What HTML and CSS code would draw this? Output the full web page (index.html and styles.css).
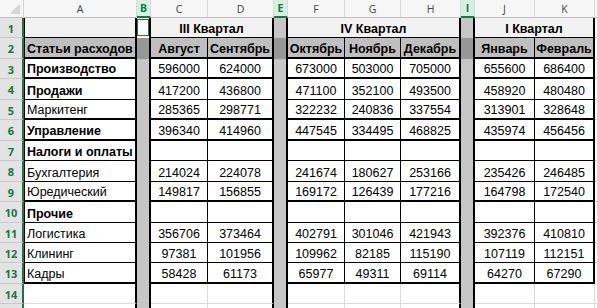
FILE: index.html
```html
<!DOCTYPE html>
<html lang="ru">
<head>
<meta charset="utf-8">
<title>Расходы</title>
<link rel="stylesheet" href="styles.css">
</head>
<body>
<div class="sheet">
  <div class="corner"></div>
  <div class="ch">A</div><div class="ch sel">B</div><div class="ch">C</div><div class="ch">D</div><div class="ch sel">E</div><div class="ch">F</div><div class="ch">G</div><div class="ch">H</div><div class="ch sel">I</div><div class="ch">J</div><div class="ch">K</div><div class="ch"></div>

  <div class="row">
    <div class="rh">1</div>
    <div class="t a q"></div>
    <div class="sep act"><div class="box"></div></div>
    <div class="t q b tr s2">III Квартал</div>
    <div class="sep"></div>
    <div class="t q b tr s3">IV Квартал</div>
    <div class="sep"></div>
    <div class="t q b tr s2">I Квартал</div>
    <div class="c"></div>
  </div>

  <div class="row tb">
    <div class="rh">2</div>
    <div class="t a g b">Статьи расходов</div>
    <div class="sep dk"></div>
    <div class="t g b">Август</div><div class="t g b tr">Сентябрь</div>
    <div class="sep dk"></div>
    <div class="t g b">Октябрь</div><div class="t g b">Ноябрь</div><div class="t g b tr">Декабрь</div>
    <div class="sep dk"></div>
    <div class="t g b">Январь</div><div class="t g b tr">Февраль</div>
    <div class="c"></div>
  </div>

  <div class="row tb">
    <div class="rh">3</div>
    <div class="t a b">Производство</div>
    <div class="sep"></div>
    <div class="t">596000</div><div class="t tr">624000</div>
    <div class="sep"></div>
    <div class="t">673000</div><div class="t">503000</div><div class="t tr">705000</div>
    <div class="sep"></div>
    <div class="t">655600</div><div class="t tr">686400</div>
    <div class="c"></div>
  </div>

  <div class="row">
    <div class="rh">4</div>
    <div class="t a b">Продажи</div>
    <div class="sep"></div>
    <div class="t">417200</div><div class="t tr">436800</div>
    <div class="sep"></div>
    <div class="t">471100</div><div class="t">352100</div><div class="t tr">493500</div>
    <div class="sep"></div>
    <div class="t">458920</div><div class="t tr">480480</div>
    <div class="c"></div>
  </div>

  <div class="row tb">
    <div class="rh">5</div>
    <div class="t a">Маркитенг</div>
    <div class="sep"></div>
    <div class="t">285365</div><div class="t tr">298771</div>
    <div class="sep"></div>
    <div class="t">322232</div><div class="t">240836</div><div class="t tr">337554</div>
    <div class="sep"></div>
    <div class="t">313901</div><div class="t tr">328648</div>
    <div class="c"></div>
  </div>

  <div class="row tb">
    <div class="rh">6</div>
    <div class="t a b">Управление</div>
    <div class="sep"></div>
    <div class="t">396340</div><div class="t tr">414960</div>
    <div class="sep"></div>
    <div class="t">447545</div><div class="t">334495</div><div class="t tr">468825</div>
    <div class="sep"></div>
    <div class="t">435974</div><div class="t tr">456456</div>
    <div class="c"></div>
  </div>

  <div class="row">
    <div class="rh">7</div>
    <div class="t a b">Налоги и оплаты</div>
    <div class="sep"></div>
    <div class="t"></div><div class="t tr"></div>
    <div class="sep"></div>
    <div class="t"></div><div class="t"></div><div class="t tr"></div>
    <div class="sep"></div>
    <div class="t"></div><div class="t tr"></div>
    <div class="c"></div>
  </div>

  <div class="row">
    <div class="rh">8</div>
    <div class="t a">Бухгалтерия</div>
    <div class="sep"></div>
    <div class="t">214024</div><div class="t tr">224078</div>
    <div class="sep"></div>
    <div class="t">241674</div><div class="t">180627</div><div class="t tr">253166</div>
    <div class="sep"></div>
    <div class="t">235426</div><div class="t tr">246485</div>
    <div class="c"></div>
  </div>

  <div class="row tb">
    <div class="rh">9</div>
    <div class="t a">Юредический</div>
    <div class="sep"></div>
    <div class="t">149817</div><div class="t tr">156855</div>
    <div class="sep"></div>
    <div class="t">169172</div><div class="t">126439</div><div class="t tr">177216</div>
    <div class="sep"></div>
    <div class="t">164798</div><div class="t tr">172540</div>
    <div class="c"></div>
  </div>

  <div class="row">
    <div class="rh">10</div>
    <div class="t a b">Прочие</div>
    <div class="sep"></div>
    <div class="t"></div><div class="t tr"></div>
    <div class="sep"></div>
    <div class="t"></div><div class="t"></div><div class="t tr"></div>
    <div class="sep"></div>
    <div class="t"></div><div class="t tr"></div>
    <div class="c"></div>
  </div>

  <div class="row">
    <div class="rh">11</div>
    <div class="t a">Логистика</div>
    <div class="sep"></div>
    <div class="t">356706</div><div class="t tr">373464</div>
    <div class="sep"></div>
    <div class="t">402791</div><div class="t">301046</div><div class="t tr">421943</div>
    <div class="sep"></div>
    <div class="t">392376</div><div class="t tr">410810</div>
    <div class="c"></div>
  </div>

  <div class="row">
    <div class="rh">12</div>
    <div class="t a">Клининг</div>
    <div class="sep"></div>
    <div class="t">97381</div><div class="t tr">101956</div>
    <div class="sep"></div>
    <div class="t">109962</div><div class="t">82185</div><div class="t tr">115190</div>
    <div class="sep"></div>
    <div class="t">107119</div><div class="t tr">112151</div>
    <div class="c"></div>
  </div>

  <div class="row tb">
    <div class="rh">13</div>
    <div class="t a">Кадры</div>
    <div class="sep"></div>
    <div class="t">58428</div><div class="t tr">61173</div>
    <div class="sep"></div>
    <div class="t">65977</div><div class="t">49311</div><div class="t tr">69114</div>
    <div class="sep"></div>
    <div class="t">64270</div><div class="t tr">67290</div>
    <div class="c"></div>
  </div>

  <div class="row">
    <div class="rh">14</div>
    <div class="c kr"></div>
    <div class="sep"></div>
    <div class="c"></div><div class="c kr"></div>
    <div class="sep"></div>
    <div class="c"></div><div class="c"></div><div class="c kr"></div>
    <div class="sep"></div>
    <div class="c"></div><div class="c"></div>
    <div class="c"></div>
  </div>

  <div class="row">
    <div class="rh"></div>
    <div class="c kr"></div>
    <div class="sep"></div>
    <div class="c"></div><div class="c kr"></div>
    <div class="sep"></div>
    <div class="c"></div><div class="c"></div><div class="c kr"></div>
    <div class="sep"></div>
    <div class="c"></div><div class="c"></div>
    <div class="c"></div>
  </div>
</div>
</body>
</html>
```

FILE: styles.css
```css
body {
  margin: 0;
  background: #fff;
}

.sheet {
  display: grid;
  grid-template-columns: 24px 113px 14px 57px 66px 14px 57px 56px 60px 14px 60px 60px 3px;
  grid-template-rows: 18px 20px 21px 20px 21px 20px 21px 20px 21px 20px 21px 20px 20px 21px 20px 20px;
  width: 598px;
  height: 308px;
  overflow: hidden;
  font-family: "Liberation Sans", Arial, sans-serif;
  font-size: 12.5px;
  color: #000;
}

.row {
  display: contents;
}

.corner, .ch, .rh, .t, .c, .sep {
  box-sizing: border-box;
  display: flex;
  align-items: flex-end;
  justify-content: center;
  white-space: nowrap;
  overflow: hidden;
  line-height: 14px;
  padding-bottom: 1px;
}

.corner {
  background: linear-gradient(135deg, transparent 50%, #d6d6d6 50%) no-repeat right 3px bottom 3px / 10px 10px, #f6f6f6;
  border-right: 1px solid #d4d4d4;
  border-bottom: 1px solid #bdbdbd;
}

.ch {
  background: #f6f6f6;
  border-right: 1px solid #d9d9d9;
  border-bottom: 1px solid #bdbdbd;
  color: #444;
  font-family: "Open Sans", "Liberation Sans", sans-serif;
  font-size: 10.5px;
  align-items: center;
  padding: 0;
}

.ch.sel {
  background: #d3f0e0;
  color: #217346;
  font-weight: bold;
  border-bottom: 2px solid #217346;
}

.rh {
  background: #e3e3e3;
  border-right: 2px solid #217346;
  border-bottom: 1px solid #c8c8c8;
  color: #217346;
  font-family: "Open Sans", "Liberation Sans", sans-serif;
  font-size: 11px;
  font-weight: bold;
  align-items: center;
  padding: 2px 0 0;
}

.t {
  border-right: 1px solid #000;
  border-bottom: 1px solid #000;
}

.tb .t {
  border-bottom-width: 2px;
}

.tr {
  border-right-width: 2px;
}

.a {
  border-left: 1px solid #000;
  border-right-width: 2px;
  justify-content: flex-start;
  padding-left: 2px;
}

.q {
  background: #f2f2f2;
}

.g {
  background: #bfbfbf;
}

.b {
  font-weight: bold;
}

.s2 {
  grid-column: span 2;
}

.s3 {
  grid-column: span 3;
}

.sep {
  background: #c6c6c6;
  border-right: 2px solid #000;
}

.sep.dk {
  background: #979797;
}

.act {
  background: #fff;
  align-items: stretch;
  padding: 1px 0 2px;
}

.box {
  flex: 1;
  border: 1px solid #217346;
}

.c {
  border-right: 1px solid #dadada;
  border-bottom: 1px solid #dadada;
}

.c.kr {
  border-right: 2px solid #000;
}
```
